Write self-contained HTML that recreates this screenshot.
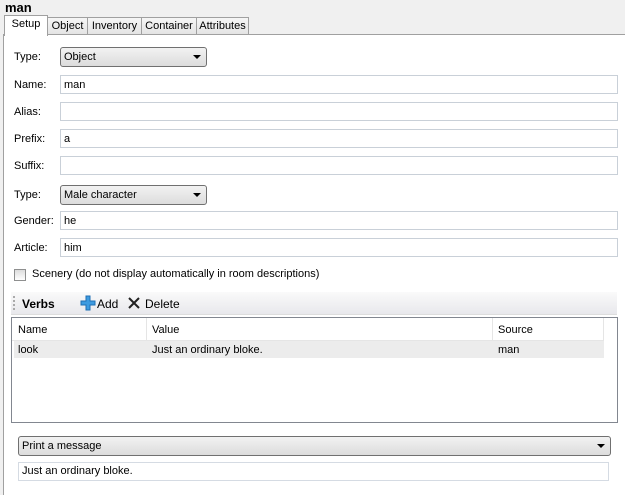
<!DOCTYPE html>
<html><head><style>
html,body{margin:0;width:625px;height:495px;overflow:hidden}
body{background:#f0f0f0;font-family:"Liberation Sans",Arial,sans-serif;font-size:11px;color:#000;position:relative}
.a{position:absolute}
.title{left:5px;top:0px;font-weight:bold;font-size:13px}
.tab{top:17px;height:16px;border:1px solid #a0a0a0;border-bottom:none;background:linear-gradient(#f6f6f6,#e4e4e4);line-height:16px;text-align:center;font-size:11px}
.panel{left:3px;top:34px;width:640px;height:480px;background:#fff;border:1px solid #a0a0a0}
.lbl{left:14px;font-size:11px}
.tb{left:60px;width:558px;height:19px;border:1px solid #c9d0d8;background:#fff;line-height:18px;padding-left:3px;box-sizing:border-box}
.sel{border:1px solid #707070;border-radius:3px;background:linear-gradient(#f2f2f2,#dcdcdc);height:18px;line-height:18px;padding-left:3px}
.arr{position:absolute;right:5px;top:7px;width:0;height:0;border-left:4px solid transparent;border-right:4px solid transparent;border-top:4px solid #000}
</style></head><body>
<div class="a title">man</div>
<div class="a panel"></div>
<div class="a tab" style="left:4px;top:15px;width:42px;height:20px;background:#fff;z-index:2">Setup</div>
<div class="a tab" style="left:47px;width:39px">Object</div>
<div class="a tab" style="left:87px;width:53px">Inventory</div>
<div class="a tab" style="left:141px;width:54px">Container</div>
<div class="a tab" style="left:196px;width:51px">Attributes</div>

<div class="a lbl" style="top:51px">Type:</div>
<div class="a sel" style="left:60px;top:47px;width:142px">Object<span class="arr"></span></div>
<div class="a lbl" style="top:79px">Name:</div>
<div class="a tb" style="top:75px">man</div>
<div class="a lbl" style="top:106px">Alias:</div>
<div class="a tb" style="top:102px"></div>
<div class="a lbl" style="top:133px">Prefix:</div>
<div class="a tb" style="top:129px">a</div>
<div class="a lbl" style="top:160px">Suffix:</div>
<div class="a tb" style="top:156px"></div>
<div class="a lbl" style="top:189px">Type:</div>
<div class="a sel" style="left:60px;top:185px;width:142px">Male character<span class="arr"></span></div>
<div class="a lbl" style="top:215px">Gender:</div>
<div class="a tb" style="top:211px">he</div>
<div class="a lbl" style="top:242px">Article:</div>
<div class="a tb" style="top:238px">him</div>

<div class="a" style="left:14px;top:269px;width:10px;height:10px;border:1px solid #8e8f8f;background:linear-gradient(#ddd,#fff)"></div>
<div class="a" style="left:32px;top:268px">Scenery (do not display automatically in room descriptions)</div>

<div class="a" style="left:11px;top:292px;width:606px;height:22px;background:linear-gradient(#fafafa,#e8e8ec);border-bottom:1px solid #ddd"></div>
<div class="a" style="left:13px;top:296px;width:1px;height:14px;border-left:2px dotted #aaa"></div>
<div class="a" style="left:22px;top:297px;font-weight:bold;font-size:12px">Verbs</div>
<svg class="a" style="left:80px;top:295px" width="16" height="16"><path d="M6 1h4v5h5v4h-5v5h-4v-5h-5v-4h5z" fill="#3d9be0" stroke="#1f6fb4" stroke-width="1"/></svg>
<div class="a" style="left:97px;top:297px;font-size:12px">Add</div>
<svg class="a" style="left:128px;top:297px" width="12" height="12"><path d="M1 1L11 11M11 1L1 11" stroke="#222" stroke-width="2"/></svg>
<div class="a" style="left:145px;top:297px;font-size:12px">Delete</div>

<div class="a" style="left:11px;top:317px;width:605px;height:104px;border:1px solid #828790;background:#fff"></div>
<div class="a" style="left:12px;top:318px;width:592px;height:22px;background:#fff;border-bottom:1px solid #e5e5e5"></div>
<div class="a" style="left:146px;top:318px;width:1px;height:22px;background:#e5e5e5"></div>
<div class="a" style="left:492px;top:318px;width:1px;height:22px;background:#e5e5e5"></div>
<div class="a" style="left:603px;top:318px;width:1px;height:22px;background:#e5e5e5"></div>
<div class="a" style="left:18px;top:324px">Name</div>
<div class="a" style="left:152px;top:324px">Value</div>
<div class="a" style="left:498px;top:324px">Source</div>
<div class="a" style="left:14px;top:341px;width:590px;height:17px;background:#ececec"></div>
<div class="a" style="left:18px;top:344px">look</div>
<div class="a" style="left:152px;top:344px">Just an ordinary bloke.</div>
<div class="a" style="left:498px;top:344px">man</div>

<div class="a sel" style="left:18px;top:436px;width:588px">Print a message<span class="arr"></span></div>
<div class="a" style="left:18px;top:462px;width:591px;height:19px;box-sizing:border-box;border:1px solid #d5dbe3;background:#fff;line-height:17px;padding-left:3px">Just an ordinary bloke.</div>
</body></html>
